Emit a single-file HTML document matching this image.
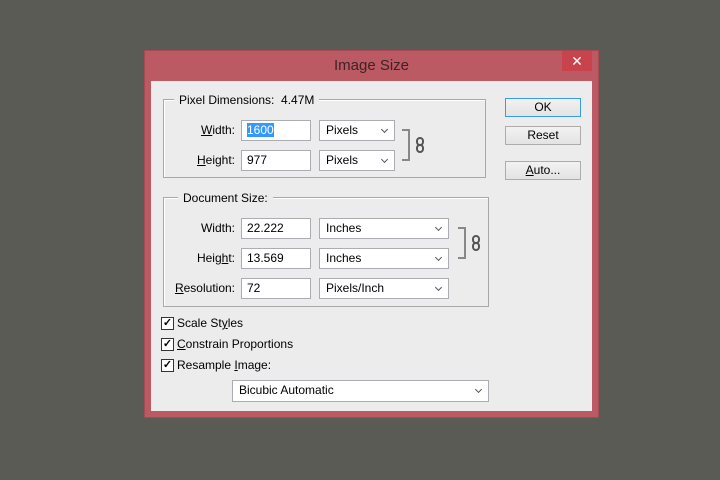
<!DOCTYPE html><html><head><style>
body{margin:0;width:720px;height:480px;background:#5b5b56;position:relative;overflow:hidden;font-family:"Liberation Sans",sans-serif;font-size:12px;color:#000}
.a{position:absolute}
.dlg{left:144px;top:50px;width:455px;height:368px;background:#bb5a63;border:1px solid #a54a52;box-sizing:border-box}
.cl{left:151px;top:81px;width:441px;height:330px;background:#ececec}
.title{left:144px;top:57px;width:455px;text-align:center;font-size:15px;color:#3d2326}
.x{left:562px;top:51px;width:30px;height:20px;background:#c8434c;color:#fff;text-align:center;font-size:14px;line-height:20px}
.grp{border:1px solid #a8a8a8;box-shadow:1px 1px 0 #fff inset}
.lg{background:#ececec;padding:0 5px;line-height:14px}
.in{background:#fff;border:1px solid #abadb3;box-sizing:border-box;height:21px;padding-left:5px;line-height:19px}
.sel{background:#fff;border:1px solid #abadb3;box-sizing:border-box;height:21px;padding-left:6px;line-height:19px}
.sel:after{content:"";position:absolute;right:7px;top:6px;width:4px;height:4px;border-right:1.5px solid #555;border-bottom:1.5px solid #555;transform:rotate(45deg)}
.lb{text-align:right;width:80px;line-height:20px}
.btn{background:linear-gradient(#f2f2f2,#e3e3e3);border:1px solid #acacac;box-sizing:border-box;text-align:center;line-height:16px;width:76px;height:19px}
.br{border:2px solid #888;border-left:none;width:6px}
.ck{width:11px;height:11px;border:1px solid #333;background:#fff;font-size:11px;line-height:11px;text-align:center;font-weight:bold}
u{text-decoration:underline}
</style></head><body>
<div class="a dlg"></div>
<div class="a title">Image Size</div>
<div class="a x">✕</div>
<div class="a cl"></div>

<div class="a grp" style="left:163px;top:99px;width:321px;height:77px"></div>
<div class="a lg" style="left:174px;top:93px">Pixel Dimensions:&nbsp; 4.47M</div>
<div class="a lb" style="left:155px;top:120px"><u>W</u>idth:</div>
<div class="a in" style="left:241px;top:120px;width:70px"><span style="background:#3399ff;color:#fff">1600</span></div>
<div class="a sel" style="left:319px;top:120px;width:76px">Pixels</div>
<div class="a lb" style="left:155px;top:150px"><u>H</u>eight:</div>
<div class="a in" style="left:241px;top:150px;width:70px">977</div>
<div class="a sel" style="left:319px;top:150px;width:76px">Pixels</div>
<div class="a br" style="left:402px;top:129px;height:28px"></div>
<svg class="a" style="left:415px;top:137px" width="10" height="16"><rect x="2" y="1" width="6" height="7" rx="3" fill="none" stroke="#555" stroke-width="2"/><rect x="2" y="8" width="6" height="7" rx="3" fill="none" stroke="#555" stroke-width="2"/></svg>

<div class="a btn" style="left:505px;top:98px;border-color:#3c9be8">OK</div>
<div class="a btn" style="left:505px;top:126px">Reset</div>
<div class="a btn" style="left:505px;top:161px"><u>A</u>uto...</div>

<div class="a grp" style="left:163px;top:197px;width:324px;height:108px"></div>
<div class="a lg" style="left:178px;top:191px">Document Size:</div>
<div class="a lb" style="left:155px;top:218px">Width:</div>
<div class="a in" style="left:241px;top:218px;width:70px">22.222</div>
<div class="a sel" style="left:319px;top:218px;width:130px">Inches</div>
<div class="a lb" style="left:155px;top:248px">Heig<u>h</u>t:</div>
<div class="a in" style="left:241px;top:248px;width:70px">13.569</div>
<div class="a sel" style="left:319px;top:248px;width:130px">Inches</div>
<div class="a lb" style="left:155px;top:278px"><u>R</u>esolution:</div>
<div class="a in" style="left:241px;top:278px;width:70px">72</div>
<div class="a sel" style="left:319px;top:278px;width:130px">Pixels/Inch</div>
<div class="a br" style="left:458px;top:227px;height:28px"></div>
<svg class="a" style="left:471px;top:235px" width="10" height="16"><rect x="2" y="1" width="6" height="7" rx="3" fill="none" stroke="#555" stroke-width="2"/><rect x="2" y="8" width="6" height="7" rx="3" fill="none" stroke="#555" stroke-width="2"/></svg>

<div class="a ck" style="left:161px;top:317px">✓</div><div class="a" style="left:177px;top:316px">Scale St<u>y</u>les</div>
<div class="a ck" style="left:161px;top:338px">✓</div><div class="a" style="left:177px;top:337px"><u>C</u>onstrain Proportions</div>
<div class="a ck" style="left:161px;top:359px">✓</div><div class="a" style="left:177px;top:358px">Resample <u>I</u>mage:</div>
<div class="a sel" style="left:232px;top:380px;width:257px;height:22px">Bicubic Automatic</div>
</body></html>
